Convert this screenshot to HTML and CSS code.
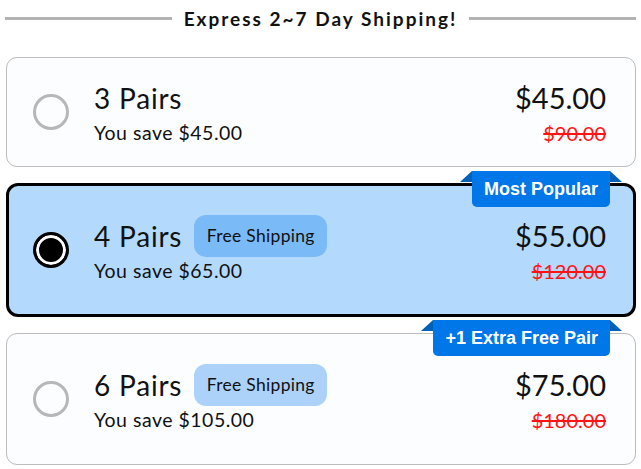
FILE: index.html
```html
<!DOCTYPE html>
<html>
<head>
<meta charset="utf-8">
<link rel="stylesheet" href="styles.css">
</head>
<body>
<div class="wrap">
  <div class="header">
    <span class="line"></span>
    <span class="htext">Express 2~7 Day Shipping!</span>
    <span class="line"></span>
  </div>

  <div class="card">
    <span class="radio"></span>
    <div class="info">
      <div class="title-row"><span class="title">3 Pairs</span></div>
      <div class="save">You save $45.00</div>
    </div>
    <div class="prices">
      <div class="price">$45.00</div>
      <div class="old">$90.00</div>
    </div>
  </div>

  <div class="card selected">
    <span class="badge">Most Popular</span>
    <span class="radio"></span>
    <div class="info">
      <div class="title-row"><span class="title">4 Pairs</span><span class="pill">Free Shipping</span></div>
      <div class="save">You save $65.00</div>
    </div>
    <div class="prices">
      <div class="price">$55.00</div>
      <div class="old">$120.00</div>
    </div>
  </div>

  <div class="card last">
    <span class="badge">+1 Extra Free Pair</span>
    <span class="radio"></span>
    <div class="info">
      <div class="title-row"><span class="title">6 Pairs</span><span class="pill">Free Shipping</span></div>
      <div class="save">You save $105.00</div>
    </div>
    <div class="prices">
      <div class="price">$75.00</div>
      <div class="old">$180.00</div>
    </div>
  </div>
</div>
</body>
</html>
```

FILE: styles.css
```css
* { box-sizing: border-box; }
html, body { margin: 0; padding: 0; background: #ffffff; }
body { font-family: "Lato", "Liberation Sans", sans-serif; color: #111; }

.wrap {
  width: 631px;
  margin-left: 5px;
  padding-top: 5px;
  display: flex;
  flex-direction: column;
}

.header {
  display: flex;
  align-items: center;
  gap: 12px;
  height: 26px;
  margin-bottom: 26px;
}
.line { flex: 1; height: 3px; background: #b3b3b3; }
.htext {
  font-family: "Lato", sans-serif;
  font-weight: 700;
  font-size: 19px;
  letter-spacing: 2px;
  color: #111;
}

.card {
  position: relative;
  display: flex;
  align-items: center;
  margin-left: 1px;
  min-height: 110px;
  border: 1px solid #bcbcbc;
  border-radius: 11px;
  background: #fcfdff;
  padding: 0 29px 0 26px;
  margin-bottom: 16px;
}
.card.selected {
  border: 3px solid #000;
  background: #b3d9fd;
  min-height: 134px;
  padding: 0 27px 0 24px;
  border-radius: 12px;
}
.card.last { min-height: 132px; }

.radio {
  width: 36px;
  height: 36px;
  border-radius: 50%;
  border: 3px solid #b7b7b7;
  flex: none;
  margin-right: 25px;
}
.selected .radio {
  border: 3px solid #000;
  background: #000;
  box-shadow: inset 0 0 0 3px #fff;
}

.info { display: flex; flex-direction: column; padding-top: 4px; }
.title-row { display: flex; align-items: center; gap: 12px; height: 30px; }
.title { font-size: 28px; line-height: 30px; letter-spacing: 0.8px; }
.pill {
  display: inline-flex;
  align-items: center;
  justify-content: center;
  width: 133px;
  height: 42px;
  margin: -6px 0;
  border-radius: 12px;
  background: #acd2fa;
  font-size: 17.5px;
  letter-spacing: 0.3px;
  color: #111;
}
.selected .pill { background: #7abaf7; }
.save { font-size: 19.5px; line-height: 26px; margin-top: 7px; letter-spacing: 0.5px; }

.prices { margin-left: auto; text-align: right; padding-top: 4px; }
.price { font-size: 29px; line-height: 30px; }
.old {
  font-size: 20px;
  line-height: 26px;
  margin-top: 7px;
  color: #ff1414;
  text-decoration: line-through;
}

.badge {
  position: absolute;
  top: -14px;
  right: 25px;
  height: 36px;
  padding: 0 12px;
  display: flex;
  align-items: center;
  background: #0077e8;
  color: #fff;
  font-family: "Liberation Sans", Arial, sans-serif;
  font-weight: 700;
  font-size: 18px;
  border-radius: 0 0 5px 5px;
}
.selected .badge { top: -15px; right: 23px; }
.badge::before, .badge::after {
  content: "";
  position: absolute;
  top: 0;
  width: 0;
  height: 0;
  border-bottom: 11px solid #0060b8;
}
.badge::before { left: -12px; border-left: 12px solid transparent; }
.badge::after { right: -12px; border-right: 12px solid transparent; }
```
